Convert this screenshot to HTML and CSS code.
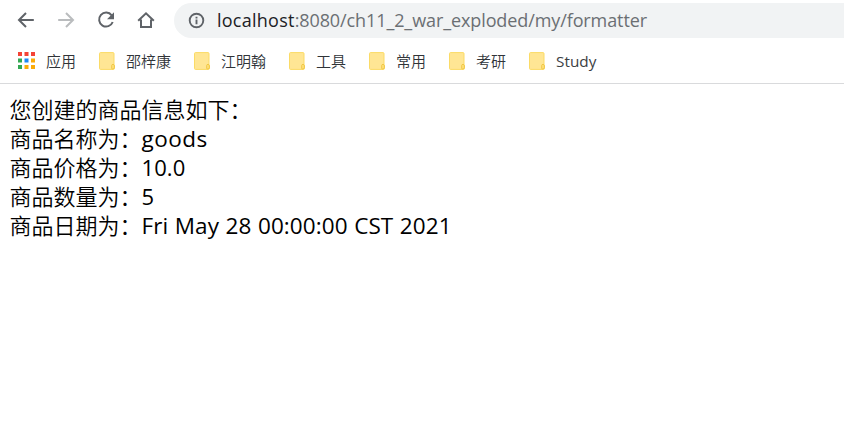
FILE: index.html
```html
<!DOCTYPE html>
<html lang="zh-CN">
<head>
<meta charset="utf-8">
<title>formatter</title>
<link rel="stylesheet" href="styles.css">
</head>
<body>
<svg class="defs" width="0" height="0" aria-hidden="true">
  <symbol id="folder" viewBox="0 0 16 18">
    <path d="M1.500 .6h12.500q1 0 1 1v11q.5.5.5 1.400v2.200q0 1.200-1.200 1.200H1.500q-1 0-1-1V1.600q0-1 1-1z" fill="#ffe694" stroke="#fbdb66"/>
    <path d="M12.700 16.500v-3.100q0-1 1.300-1t1.300 1.300v2q0 1.300-1.500 1.300z" fill="#ffe27d" stroke="#efc440" stroke-width=".9"/>
  </symbol>
</svg>
<header class="browser">
  <div class="toolbar">
    <nav class="controls">
      <svg class="icon" viewBox="0 0 20 20"><path d="M17.800 10H3.500M10 3L3 10l7 7"/></svg>
      <svg class="icon disabled" viewBox="0 0 20 20"><path d="M2.200 10h14.300M10 3l7 7-7 7"/></svg>
      <svg class="icon" viewBox="0 0 20 20"><path d="M15.700 5.300A7 7 0 1 0 16.700 12"/><path class="solid" d="M18 2.200v7h-7z"/></svg>
      <svg class="icon" viewBox="0 0 20 20"><path d="M2.200 10.800L10 3.300l7.800 7.500M5 9.500v7.600h10V9.500"/></svg>
    </nav>
    <div class="address">
      <svg class="info" viewBox="0 0 18 18"><circle cx="9" cy="9" r="7.200"/><path d="M9 8v5M9 5v1.800"/></svg>
      <span class="url"><span class="host">localhost</span>:8080/ch11_2_war_exploded/my/formatter</span>
    </div>
  </div>
  <nav class="bookmarks">
    <span class="bookmark"><svg class="apps" viewBox="0 0 17 17"><path fill="#f44336" d="M0 0h4v4H0zM6.500 0h4v4h-4zM13 0h4v4h-4z"/><path fill="#34a853" d="M0 6.500h4v4H0zM0 13h4v4H0z"/><path fill="#1e88f5" d="M6.500 6.500h4v4h-4z"/><path fill="#fbab09" d="M13 6.500h4v4h-4zM6.500 13h4v4h-4zM13 13h4v4h-4z"/></svg>应用</span>
    <span class="bookmark"><svg class="folder"><use href="#folder"/></svg>邵梓康</span>
    <span class="bookmark"><svg class="folder"><use href="#folder"/></svg>江明翰</span>
    <span class="bookmark"><svg class="folder"><use href="#folder"/></svg>工具</span>
    <span class="bookmark"><svg class="folder"><use href="#folder"/></svg>常用</span>
    <span class="bookmark"><svg class="folder"><use href="#folder"/></svg>考研</span>
    <span class="bookmark"><svg class="folder"><use href="#folder"/></svg><span class="latin">Study</span></span>
  </nav>
</header>
<main class="page">
  <div>您创建的商品信息如下：</div>
  <div>商品名称为：<span class="value word">goods</span></div>
  <div>商品价格为：<span class="value number">10.0</span></div>
  <div>商品数量为：<span class="value number">5</span></div>
  <div>商品日期为：<span class="value">Fri May 28 00:00:00 CST 2021</span></div>
</main>
</body>
</html>
```
FILE: styles.css
```css
* { box-sizing: border-box; }
body {
  margin: 0;
  height: 442px;
  overflow: hidden;
  background: #fff;
  color: #000;
  font-family: "Open Sans", "Noto Sans CJK SC", sans-serif;
}
.defs { display: none; }
.browser {
  height: 84px;
  border-bottom: 1px solid #d9dadc;
}
.toolbar {
  display: flex;
  padding: 3px 0 0 16px;
}
.controls {
  display: flex;
  align-items: center;
  gap: 20px;
  width: 158px;
  height: 34px;
}
.icon {
  width: 20px;
  height: 20px;
  fill: none;
  stroke: #5f6368;
  stroke-width: 2;
}
.icon .solid { fill: #5f6368; stroke: none; }
.disabled { stroke: #babcbe; }
.address {
  display: flex;
  flex: 1;
  align-items: center;
  gap: 12px;
  height: 35px;
  padding-left: 14px;
  border-radius: 18px 0 0 18px;
  background: #f1f3f4;
}
.info {
  width: 17px;
  height: 17px;
  fill: none;
  stroke: #5f6368;
  stroke-width: 2;
}
.url {
  color: #6b6f73;
  font-size: 18px;
  letter-spacing: -.1px;
  line-height: 35px;
  white-space: nowrap;
}
.host { color: #202124; letter-spacing: .25px; }
.bookmarks {
  display: flex;
  align-items: center;
  gap: 23px;
  height: 45px;
  padding-left: 18px;
}
.bookmark {
  display: flex;
  align-items: center;
  gap: 11px;
  color: #303438;
  font-family: "Noto Sans CJK SC", sans-serif;
  font-size: 15px;
  font-weight: 350;
  line-height: 22px;
  white-space: nowrap;
}
.latin {
  color: #3c4043;
  font-family: "Open Sans", sans-serif;
  font-size: 15.3px;
  font-weight: 400;
}
.apps { width: 17px; height: 17px; }
.folder { width: 16px; height: 18px; }
.page {
  padding: 10px 9.500px;
  font-family: "Noto Sans CJK SC", sans-serif;
  font-size: 22px;
  font-weight: 350;
  line-height: 29px;
}
.page > div { height: 29px; white-space: nowrap; }
.value {
  font-family: "Open Sans", sans-serif;
  font-size: 22.500px;
  font-weight: 400;
  letter-spacing: .08px;
  word-spacing: .6px;
}
.word { letter-spacing: .5px; }
.number { font-size: 22px; }
```
